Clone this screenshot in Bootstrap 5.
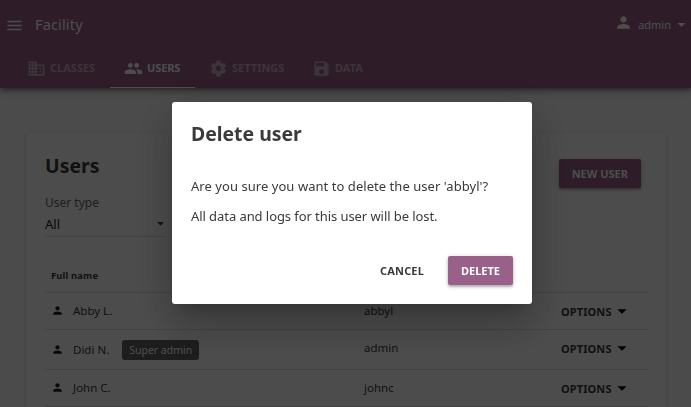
<!DOCTYPE html>
<html lang="en">
<head>
<meta charset="utf-8">
<meta name="viewport" content="width=device-width, initial-scale=1">
<title>Facility - Users</title>
<link href="https://cdn.jsdelivr.net/npm/bootstrap@5.3.0/dist/css/bootstrap.min.css" rel="stylesheet">
<style>
  body { font-family: "Noto Sans", sans-serif; font-size: 11.5px; line-height: 16px; color: #3a3a3a; background: #fafafa; height: 407px; overflow: hidden; }
  svg { fill: currentColor; display: block; flex: none; }
  .app-header { height: 88px; background: #996189; color: #fff; position: relative; box-shadow: 0 2px 4px -1px rgba(0,0,0,.3), 0 4px 5px rgba(0,0,0,.2), 0 1px 10px rgba(0,0,0,.15); }
  .app-top { height: 49px; padding: 0 0 0 5px; }
  .menu-icon { margin-top: 1px; }
  .app-title { font-size: 14.5px; letter-spacing: .15px; margin-left: 11px; line-height: 18px; padding-bottom: 1px; }
  .account { font-size: 11px; padding-right: 0; }
  .account-icon { margin: 0 5px 4px 0; }
  .account-arrow { margin-left: 1px; }
  .app-tabs { height: 39px; padding-left: 13px; font-weight: 700; font-size: 11px; }
  .app-tab { color: #c7aebf; padding: 0 14px; border-bottom: 1px solid transparent; gap: 4px; white-space: nowrap; }
  .app-tab.current { color: #fff; border-color: #fff; }
  .tab-classes { width: 97px; } .tab-users { width: 85px; letter-spacing: -.1px; } .tab-settings { width: 103px; } .tab-data { width: 80px; }
  .page-card { margin: 45px 25px 0 26px; height: 274px; overflow: hidden; padding: 0 18px 0 19px; border-radius: 3px 3px 0 0; background: #fff; box-shadow: 0 1px 3px rgba(0,0,0,.2), 0 1px 1px rgba(0,0,0,.14); }
  .page-head { height: 61px; padding: 20px 7px 0 0; }
  h1, h2 { font-size: 19.4px; line-height: 26px; font-weight: 700; margin: 0; }
  .new-user { margin-top: 6px; }
  .flat-btn { font-family: inherit; font-weight: 700; font-size: 11px; line-height: 29px; height: 29px; padding: 0 13px; border: 0; border-radius: 2px; color: #3a3a3a; white-space: nowrap; }
  .flat-btn.raised, .flat-btn.raised:hover { background: #996189; color: #fff; box-shadow: 0 1px 5px rgba(0,0,0,.2), 0 2px 2px rgba(0,0,0,.2); }
  .cancel { letter-spacing: .15px; padding-right: 12px; }
  .new-user { color: #e0e0e0; }
  .type-select { width: 121px; height: 43px; border-bottom: 1px solid #dedede; font-size: 13px; }
  .type-label { font-size: 12px; color: #686868; line-height: 17px; }
  .type-value { color: #212121; height: 24px; padding-top: 1px; }
  .type-value svg { color: #4a4a4a; margin-right: -3px; }
  .users { width: 603px; }
  .user-row { border-bottom: 1px solid #dedede; padding-left: 6px; }
  .user-row.head { height: 56px; padding-top: 31px; font-size: 9.3px; letter-spacing: .2px; font-weight: 700; }
  .row-sm { height: 37px; }
  .row-lg { height: 40px; }
  .row-lg .login-cell { padding-bottom: 3px; }
  .row-lg .options { padding-bottom: 3px; }
  .name-cell { width: 313px; }
  .person { margin-right: 9px; margin-bottom: 1px; color: #212121; }
  .role { background: #616161; color: #fff; border-radius: 3px; height: 20px; line-height: 20px; width: 77px; text-align: center; margin-left: 13px; font-size: 10.5px; }
  .login-cell { width: 197px; }
  .options { font-size: 11px; font-weight: 700; letter-spacing: .1px; }
  .options span { padding-top: 2px; }
  .options svg { color: #000; margin-bottom: 1px; margin-left: -1px; }
  .modal-backdrop { --bs-backdrop-opacity: .7; }
  .confirm { width: 360px; margin: 102px 0 0 172px; max-width: none; }
  .confirm .modal-content { height: 202px; border: 0; border-radius: 3px; color: #3a3a3a; padding: 19px; box-shadow: 0 11px 15px -7px rgba(0,0,0,.2), 0 24px 38px 3px rgba(0,0,0,.14), 0 9px 46px 8px rgba(0,0,0,.12); }
  .confirm p { font-size: 13px; line-height: 18px; margin: 0 0 12px; white-space: nowrap; letter-spacing: .05px; }
  .confirm p + p { letter-spacing: -.07px; }
  .confirm-text { padding-top: 30px; }
</style>
</head>
<body>
<svg class="d-none" aria-hidden="true">
  <symbol id="i-person" viewBox="0 0 24 24"><path d="M12 12c2.21 0 4-1.79 4-4s-1.79-4-4-4-4 1.79-4 4 1.79 4 4 4zm0 2c-2.67 0-8 1.34-8 4v2h16v-2c0-2.66-5.33-4-8-4z"/></symbol>
  <symbol id="i-drop" viewBox="0 0 24 24"><path d="M7 10l5 5 5-5z"/></symbol>
</svg>

<header class="app-header">
  <div class="app-top d-flex align-items-center">
    <svg class="menu-icon" width="19" height="19" viewBox="0 0 24 24"><path d="M3 18h18v-2H3v2zm0-5h18v-2H3v2zm0-7v2h18V6H3z"/></svg>
    <span class="app-title">Facility</span>
    <span class="account ms-auto d-flex align-items-center"><svg class="account-icon" width="19" height="19"><use href="#i-person"/></svg>admin<svg class="account-arrow" width="19" height="19"><use href="#i-drop"/></svg></span>
  </div>
  <nav class="app-tabs d-flex">
    <div class="app-tab tab-classes d-flex align-items-center"><svg width="19" height="19" viewBox="0 0 24 24"><path d="M12 7V3H2v18h20V7H12zM6 19H4v-2h2v2zm0-4H4v-2h2v2zm0-4H4V9h2v2zm0-4H4V5h2v2zm4 12H8v-2h2v2zm0-4H8v-2h2v2zm0-4H8V9h2v2zm0-4H8V5h2v2zm10 12h-8v-2h2v-2h-2v-2h2v-2h-2V9h8v10zm-2-8h-2v2h2v-2zm0 4h-2v2h2v-2z"/></svg>CLASSES</div>
    <div class="app-tab tab-users current d-flex align-items-center"><svg width="19" height="19" viewBox="0 0 24 24"><path d="M16 11c1.66 0 2.99-1.34 2.99-3S17.66 5 16 5c-1.66 0-3 1.34-3 3s1.34 3 3 3zm-8 0c1.66 0 2.99-1.34 2.99-3S9.66 5 8 5C6.34 5 5 6.34 5 8s1.34 3 3 3zm0 2c-2.33 0-7 1.17-7 3.5V19h14v-2.5c0-2.33-4.67-3.5-7-3.5zm8 0c-.29 0-.62.02-.97.05 1.16.84 1.97 1.97 1.97 3.45V19h6v-2.5c0-2.33-4.67-3.5-7-3.5z"/></svg>USERS</div>
    <div class="app-tab tab-settings d-flex align-items-center"><svg width="19" height="19" viewBox="0 0 24 24"><path d="M19.43 12.98c.04-.32.07-.64.07-.98s-.03-.66-.07-.98l2.11-1.65c.19-.15.24-.42.12-.64l-2-3.46c-.12-.22-.39-.3-.61-.22l-2.49 1c-.52-.4-1.08-.73-1.69-.98l-.38-2.65C14.46 2.18 14.25 2 14 2h-4c-.25 0-.46.18-.49.42l-.38 2.65c-.61.25-1.17.59-1.69.98l-2.49-1c-.23-.09-.49 0-.61.22l-2 3.46c-.13.22-.07.49.12.64l2.11 1.65c-.04.32-.07.65-.07.98s.03.66.07.98l-2.11 1.65c-.19.15-.24.42-.12.64l2 3.46c.12.22.39.3.61.22l2.49-1c.52.4 1.08.73 1.69.98l.38 2.65c.03.24.24.42.49.42h4c.25 0 .46-.18.49-.42l.38-2.65c.61-.25 1.17-.59 1.69-.98l2.49 1c.23.09.49 0 .61-.22l2-3.46c.12-.22.07-.49-.12-.64l-2.11-1.65zM12 15.5c-1.93 0-3.5-1.57-3.5-3.5s1.57-3.5 3.5-3.5 3.5 1.57 3.5 3.5-1.57 3.5-3.5 3.5z"/></svg>SETTINGS</div>
    <div class="app-tab tab-data d-flex align-items-center"><svg width="19" height="19" viewBox="0 0 24 24"><path d="M17 3H5c-1.11 0-2 .9-2 2v14c0 1.1.89 2 2 2h14c1.1 0 2-.9 2-2V7l-4-4zm-5 16c-1.66 0-3-1.34-3-3s1.34-3 3-3 3 1.34 3 3-1.34 3-3 3zm3-10H5V5h10v4z"/></svg>DATA</div>
  </nav>
</header>

<main class="page-card">
  <div class="page-head d-flex justify-content-between align-items-start">
    <h1>Users</h1>
    <button class="btn flat-btn raised new-user">NEW USER</button>
  </div>
  <div class="type-select">
    <div class="type-label">User type</div>
    <div class="type-value d-flex align-items-center justify-content-between">All<svg width="17" height="17"><use href="#i-drop"/></svg></div>
  </div>
  <div class="users">
    <div class="user-row head">Full name</div>
    <div class="user-row row-sm d-flex align-items-center">
      <div class="name-cell d-flex align-items-center"><svg class="person" width="13" height="13"><use href="#i-person"/></svg>Abby L.</div>
      <div class="login-cell">abbyl</div>
      <div class="options d-flex align-items-center"><span>OPTIONS</span><svg width="22" height="22"><use href="#i-drop"/></svg></div>
    </div>
    <div class="user-row row-lg d-flex align-items-center">
      <div class="name-cell d-flex align-items-center"><svg class="person" width="13" height="13"><use href="#i-person"/></svg>Didi N.<span class="role">Super admin</span></div>
      <div class="login-cell">admin</div>
      <div class="options d-flex align-items-center"><span>OPTIONS</span><svg width="22" height="22"><use href="#i-drop"/></svg></div>
    </div>
    <div class="user-row row-sm d-flex align-items-center">
      <div class="name-cell d-flex align-items-center"><svg class="person" width="13" height="13"><use href="#i-person"/></svg>John C.</div>
      <div class="login-cell">johnc</div>
      <div class="options d-flex align-items-center"><span>OPTIONS</span><svg width="22" height="22"><use href="#i-drop"/></svg></div>
    </div>
  </div>
</main>

<div class="modal-backdrop show"></div>
<div class="modal d-block overflow-hidden" role="dialog" aria-modal="true" aria-labelledby="confirm-title">
  <div class="modal-dialog confirm">
    <div class="modal-content">
      <h2 id="confirm-title">Delete user</h2>
      <div class="confirm-text">
        <p>Are you sure you want to delete the user 'abbyl'?</p>
        <p>All data and logs for this user will be lost.</p>
      </div>
      <div class="d-flex justify-content-end mt-auto gap-2">
        <button class="btn flat-btn cancel">CANCEL</button>
        <button class="btn flat-btn raised ms-1">DELETE</button>
      </div>
    </div>
  </div>
</div>
<script src="https://cdn.jsdelivr.net/npm/bootstrap@5.3.0/dist/js/bootstrap.bundle.min.js"></script>
</body>
</html>
